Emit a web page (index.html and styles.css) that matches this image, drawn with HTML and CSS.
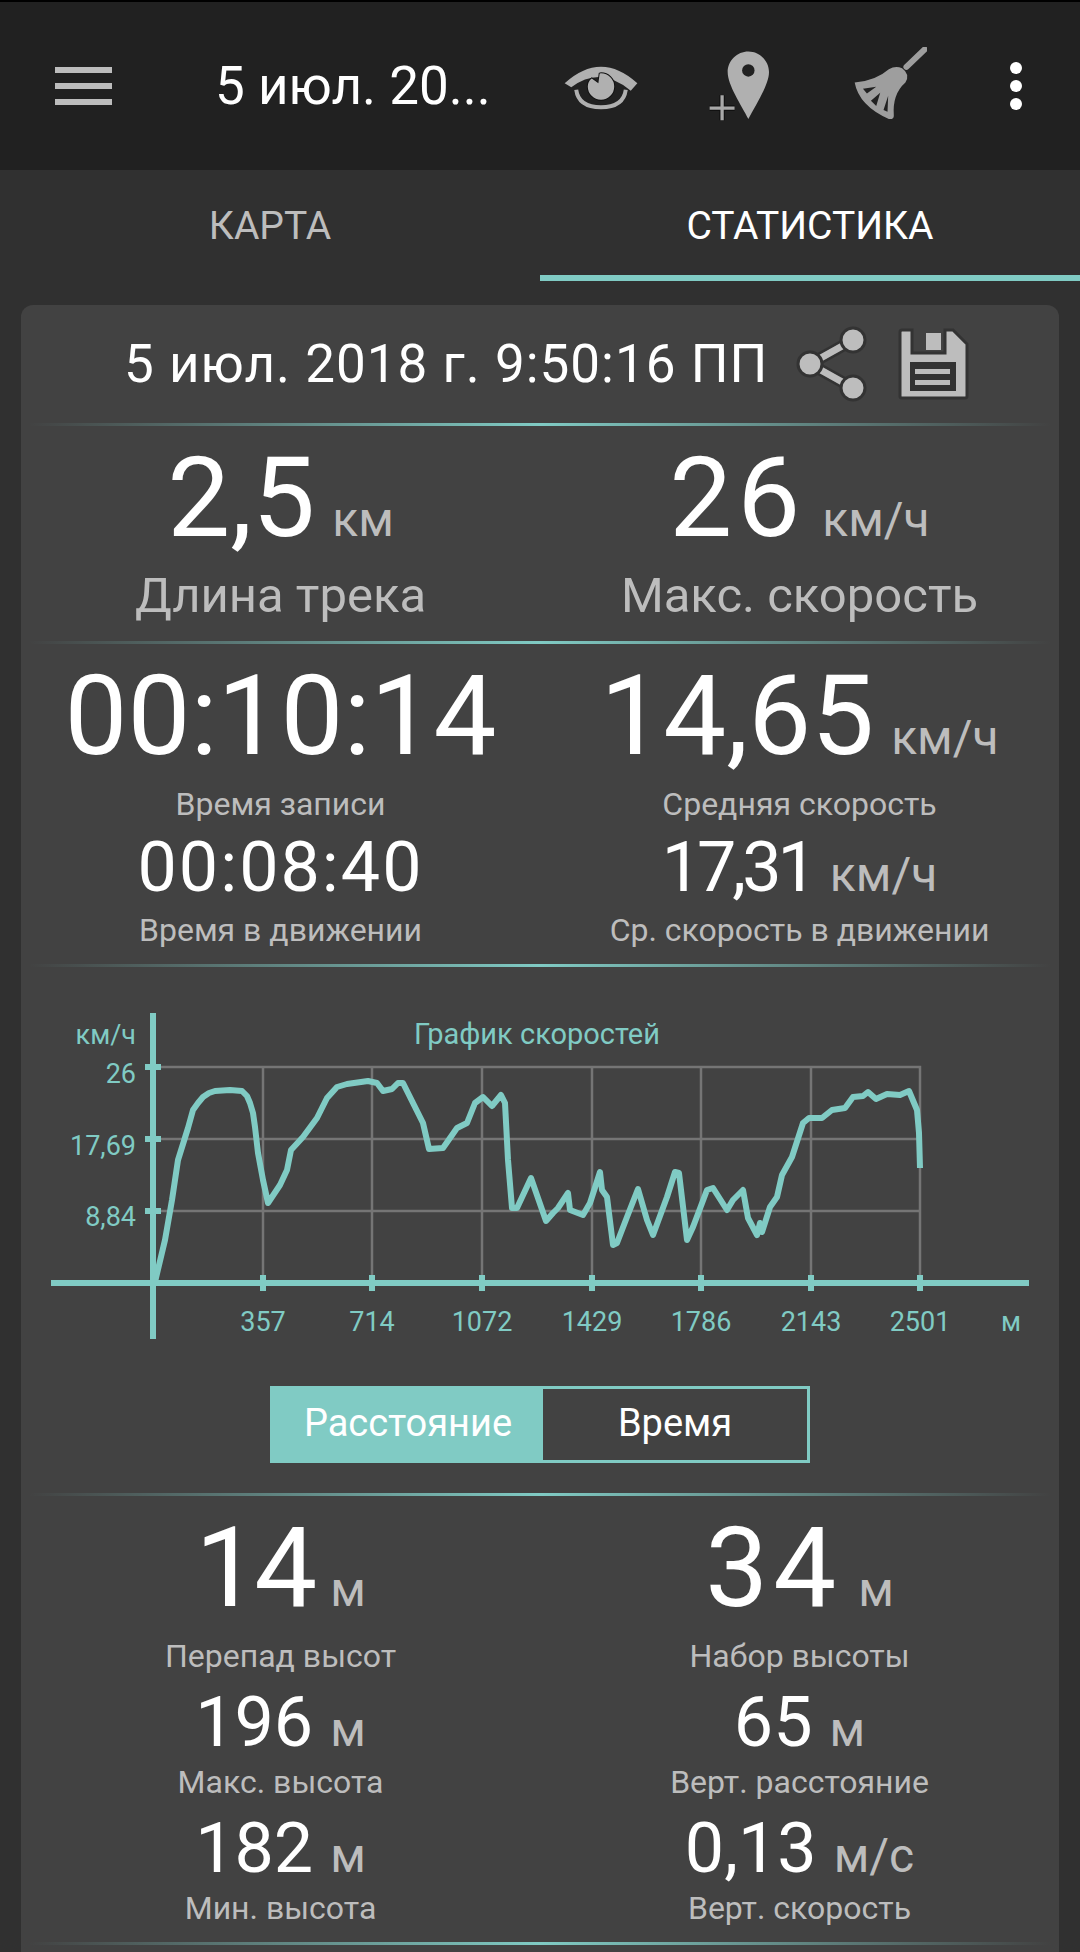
FILE: index.html
```html
<!DOCTYPE html>
<html lang="ru">
<head>
    <meta charset="UTF-8">
    <meta name="viewport" content="width=device-width, initial-scale=1.0">
    <title>Статистика</title>
    <link rel="stylesheet" href="styles.css">
</head>
<body>
    <header class="toolbar">
        <svg class="ic-menu" width="57" height="38" viewBox="0 0 57 38"><path d="M0 0h57v6H0zM0 16h57v6H0zM0 32h57v6H0z"/></svg>
        <div class="toolbar-title">5 июл. 20...</div>
        <svg class="ic-eye" width="76" height="47" viewBox="125 100 230 140">
            <path class="halo" d="M130 160Q240 60 350 160L330 183Q240 105 150 172Z"/>
            <path class="ring" d="M165 180Q172 233 240 233Q308 233 315 180"/>
            <path class="fill" d="M240 130A40 40 0 1 1 200 170Q200 155 212 146L232 160L236 131Q238 130 240 130Z"/>
        </svg>
        <svg class="ic-pin" width="61" height="71" viewBox="555 62 186 214">
            <path class="fill" d="M678 62C712 62 741 90 741 125C741 165 700 225 678 268C656 225 615 165 615 125C615 90 644 62 678 62Z"/>
            <circle class="hole" cx="678" cy="120" r="19"/>
            <path class="plus-halo" d="M598 196V272M560 235H636"/>
            <path class="plus" d="M598 196V272M560 235H636"/>
        </svg>
        <svg class="ic-broom" width="73" height="73" viewBox="995 48 220 220">
            <path class="handle" d="M1153 108L1208 55"/>
            <path class="head" d="M1100 115Q1060 150 997 155Q1010 225 1100 265Q1115 267 1115 255Q1110 190 1150 155Q1165 130 1140 112Q1120 103 1100 115Z"/>
            <path class="hole" d="M1022 174L1062 168L1034 188ZM1046 210L1074 186L1062 226ZM1084 238L1098 195L1096 243Z"/>
        </svg>
        <svg class="ic-dots" width="12" height="48" viewBox="0 0 12 48"><circle cx="6" cy="6" r="6"/><circle cx="6" cy="24" r="6"/><circle cx="6" cy="42" r="6"/></svg>
    </header>

    <nav class="tabs">
        <div class="tab">КАРТА</div>
        <div class="tab active">СТАТИСТИКА</div>
    </nav>

    <main class="card">
        <div class="track-head">
            <div class="track-date">5 июл. 2018 г. 9:50:16 ПП</div>
            <svg class="ic-share" width="67" height="72" viewBox="0 0 67 72">
                <path class="share-halo" d="M12 36L55 12M12 36L55 60"/>
                <path class="share-line" d="M12 36L55 12M12 36L55 60"/>
                <circle class="share-dot" cx="55" cy="12" r="12"/>
                <circle class="share-dot" cx="12" cy="36" r="12"/>
                <circle class="share-dot" cx="55" cy="60" r="12"/>
            </svg>
            <svg class="ic-save" width="67" height="68" viewBox="0 0 67 68">
                <path class="save-body" d="M2 0H12V23H45V0H53L67 14V66Q67 68 65 68H2Q0 68 0 66V2Q0 0 2 0Z"/>
                <rect class="save-part" x="26" y="3" width="15" height="17"/>
                <rect class="save-slot" x="10" y="32" width="46" height="29"/>
                <rect class="save-part" x="15" y="39" width="35" height="5"/>
                <rect class="save-part" x="15" y="50" width="35" height="5"/>
            </svg>
        </div>
        <div class="sep"></div>

        <section class="stats stats-main">
            <div class="stat">
                <div class="val val-xl">2,5<span class="unit">км</span></div>
                <div class="lbl lbl-lg">Длина трека</div>
            </div>
            <div class="stat">
                <div class="val val-xl wide">26<span class="unit">км/ч</span></div>
                <div class="lbl lbl-lg">Макс. скорость</div>
            </div>
        </section>
        <div class="sep"></div>

        <section class="stats stats-time">
            <div class="stat">
                <div class="val val-xl">00:10:14</div>
                <div class="lbl">Время записи</div>
                <div class="val val-md spaced">00:08:40</div>
                <div class="lbl">Время в движении</div>
            </div>
            <div class="stat">
                <div class="val val-xl">14,65<span class="unit">км/ч</span></div>
                <div class="lbl">Средняя скорость</div>
                <div class="val val-md tight">17,31<span class="unit">км/ч</span></div>
                <div class="lbl">Ср. скорость в движении</div>
            </div>
        </section>
        <div class="sep"></div>

        <svg class="chart" width="1038" height="402" viewBox="21 968 1038 402">
            <path class="grid" d="M153 1067H920V1283M153 1139H920M153 1211H920M263 1067V1283M372 1067V1283M482 1067V1283M592 1067V1283M701 1067V1283M811 1067V1283"/>
            <path class="axis" d="M153 1013V1339M51 1283H1029"/>
            <path class="tick" d="M145 1067H161M145 1139H161M145 1211H161M263 1275V1291M372 1275V1291M482 1275V1291M592 1275V1291M701 1275V1291M811 1275V1291M920 1275V1291"/>
            <path class="curve" d="M155 1282L165 1240L172 1200L178 1160L188 1128L193 1110L198 1103L203 1097L209 1093L215 1091L230 1090L242 1091L247 1096L250 1103L253 1113L255 1127L258 1153L263 1180L268 1203L280 1185L287 1170L291 1150L303 1137L317 1118L327 1098L337 1087L347 1084L368 1081L377 1083L383 1091L392 1089L398 1083L403 1083L413 1103L423 1123L429 1149L443 1148L457 1128L467 1123L475 1103L483 1097L492 1106L501 1095L505 1103L508 1160L512 1208L517 1208L531 1178L546 1221L553 1213L558 1208L568 1193L570 1210L583 1215L590 1203L600 1172L602 1190L607 1197L613 1245L617 1243L627 1217L638 1189L647 1220L653 1235L667 1197L675 1172L679 1173L687 1240L693 1227L707 1190L713 1188L727 1210L733 1200L743 1190L748 1218L757 1235L760 1223L762 1232L770 1207L777 1197L782 1175L792 1157L803 1123L809 1118L822 1118L832 1110L845 1108L853 1097L863 1096L868 1092L876 1099L887 1094L900 1095L909 1091L917 1110L919 1133L920 1168"/>
            <text class="ct ct-end" x="136" y="1044">км/ч</text>
            <text class="ct ct-end" x="136" y="1083">26</text>
            <text class="ct ct-end" x="136" y="1155">17,69</text>
            <text class="ct ct-end" x="136" y="1226">8,84</text>
            <text class="ct ct-title" x="537" y="1044">График скоростей</text>
            <text class="ct ct-mid" x="263" y="1331">357</text>
            <text class="ct ct-mid" x="372" y="1331">714</text>
            <text class="ct ct-mid" x="482" y="1331">1072</text>
            <text class="ct ct-mid" x="592" y="1331">1429</text>
            <text class="ct ct-mid" x="701" y="1331">1786</text>
            <text class="ct ct-mid" x="811" y="1331">2143</text>
            <text class="ct ct-mid" x="920" y="1331">2501</text>
            <text class="ct ct-mid" x="1011" y="1331">м</text>
        </svg>

        <div class="toggle">
            <div class="toggle-item on">Расстояние</div>
            <div class="toggle-item">Время</div>
        </div>
        <div class="sep"></div>

        <section class="stats stats-alt">
            <div class="stat">
                <div class="val val-xl tight">14<span class="unit">м</span></div>
                <div class="lbl">Перепад высот</div>
                <div class="val val-md">196<span class="unit">м</span></div>
                <div class="lbl">Макс. высота</div>
                <div class="val val-md">182<span class="unit">м</span></div>
                <div class="lbl">Мин. высота</div>
            </div>
            <div class="stat">
                <div class="val val-xl wide">34<span class="unit">м</span></div>
                <div class="lbl">Набор высоты</div>
                <div class="val val-md">65<span class="unit">м</span></div>
                <div class="lbl">Верт. расстояние</div>
                <div class="val val-md">0,13<span class="unit">м/с</span></div>
                <div class="lbl">Верт. скорость</div>
            </div>
        </section>
        <div class="sep"></div>
    </main>
</body>
</html>
```
FILE: styles.css
```css
html, body {
    margin: 0;
    height: 1952px;
    overflow: hidden;
}
body {
    font-family: Roboto, "Noto Sans", sans-serif;
    background-color: #303030;
    color: #fff;
}

/* toolbar */
.toolbar {
    display: flex;
    align-items: center;
    box-sizing: border-box;
    height: 170px;
    padding-left: 55px;
    background: #212121;
    border-top: 2px solid #000;
}
.ic-menu { fill: #bdbdbd; }
.toolbar-title {
    width: 348px;
    margin-left: 103px;
    font-size: 53px;
    white-space: nowrap;
}
.ic-eye { overflow: visible; }
.ic-eye .halo, .ic-eye .fill { fill: #b0b0b0; }
.ic-eye .fill { stroke: #111; stroke-width: 6; paint-order: stroke; }
.ic-eye .ring { fill: none; stroke: #b0b0b0; stroke-width: 12; }
.ic-pin { margin-left: 69px; overflow: visible; }
.ic-pin .fill { fill: #b0b0b0; }
.hole { fill: #212121; }
.plus-halo { fill: none; stroke: #111; stroke-width: 17; }
.plus { fill: none; stroke: #a8a8a8; stroke-width: 10; }
.ic-broom { margin-left: 85px; margin-top: -6px; }
.ic-broom .handle { stroke: #9e9e9e; stroke-width: 18; stroke-linecap: round; }
.ic-broom .head { fill: #9e9e9e; }
.ic-dots { margin-left: 83px; fill: #fff; }

/* tabs */
.tabs {
    display: grid;
    grid-template-columns: 1fr 1fr;
    height: 111px;
}
.tab {
    box-sizing: border-box;
    padding-top: 32px;
    text-align: center;
    font-size: 39px;
    line-height: 48px;
    color: #bdbdbd;
}
.tab.active {
    color: #fff;
    border-bottom: 6px solid #80cbc4;
}

/* card */
.card {
    margin: 24px 21px 0;
    background: #424242;
    border-radius: 12px 12px 0 0;
    height: 1700px;
}
.sep {
    height: 3px;
    margin: 0 8px;
    background: linear-gradient(90deg, transparent, #80cbc4, transparent);
}
.track-head {
    display: flex;
    align-items: center;
    height: 118px;
    padding-left: 103px;
}
.track-date {
    width: 674px;
    font-size: 53px;
    letter-spacing: 1px;
    white-space: nowrap;
}
.ic-share, .ic-save { overflow: visible; }
.share-halo { fill: none; stroke: #333; stroke-width: 12; }
.share-line { fill: none; stroke: #bdbdbd; stroke-width: 7; }
.share-dot { fill: #bdbdbd; stroke: #333; stroke-width: 3; }
.ic-save { margin-left: 35px; }
.save-body { fill: #bdbdbd; stroke: #333; stroke-width: 3; }
.save-part { fill: #bdbdbd; }
.save-slot { fill: #333; }

/* stat blocks */
.stats {
    display: grid;
    grid-template-columns: 1fr 1fr;
    text-align: center;
}
.stats-main { padding: 14px 0 19px; }
.stats-time { padding: 14px 0 16px; }
.stats-alt { padding: 14px 0 16px; }
.val-xl {
    font-size: 112px;
    line-height: 116px;
}
.val-md {
    font-size: 70px;
    line-height: 70px;
    margin-top: 13px;
}
.wide { letter-spacing: 5px; }
.tight { letter-spacing: -4px; }
.spaced { letter-spacing: 2px; }
.unit {
    margin-left: 17px;
    font-size: 48px;
    line-height: 1;
    letter-spacing: 0;
    color: #bdbdbd;
}
.lbl {
    margin-top: 7px;
    font-size: 32px;
    line-height: 36px;
    color: #bdbdbd;
}
.val-xl + .lbl { margin-top: 12px; }
.lbl-lg {
    font-size: 49px;
    line-height: 56px;
}
.val-xl + .lbl-lg { margin-top: 12px; }
.stats-main { padding-bottom: 17px; }
.stats-time .val-md { margin-top: 10px; }
.stats-time .val-md + .lbl { margin-top: 10px; }

/* chart */
.chart { display: block; margin-top: 1px; }
.grid { fill: none; stroke: #757575; stroke-width: 2.5; }
.axis { fill: none; stroke: #80cbc4; stroke-width: 6; }
.tick { fill: none; stroke: #80cbc4; stroke-width: 6; }
.curve { fill: none; stroke: #80cbc4; stroke-width: 6; stroke-linejoin: round; }
.ct { fill: #80cbc4; font-size: 27px; }
.ct-end { text-anchor: end; }
.ct-mid { text-anchor: middle; }
.ct-title { text-anchor: middle; font-size: 29px; }

/* toggle */
.toggle {
    display: flex;
    box-sizing: border-box;
    width: 540px;
    height: 77px;
    margin: 16px auto 30px;
    border: 3px solid #80cbc4;
}
.toggle-item {
    flex: 1;
    text-align: center;
    font-size: 38px;
    line-height: 69px;
}
.toggle-item.on {
    flex: none;
    width: 270px;
    background: #80cbc4;
}
```
